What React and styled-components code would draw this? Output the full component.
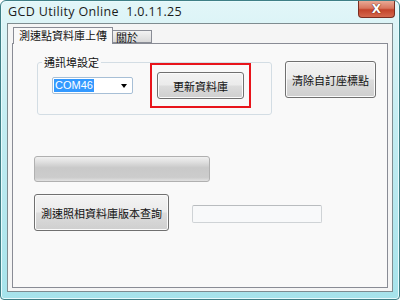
import React from "react";
import styled, { createGlobalStyle } from "styled-components";

const Global = createGlobalStyle`
  html, body { margin: 0; padding: 0; background: #ffffff; }
  body { font-family: "Noto Sans CJK TC", "Noto Sans", sans-serif; }
`;

const Window = styled.div`
  width: 400px;
  height: 300px;
  box-sizing: border-box;
  border: 1px solid #3f7f86;
  border-radius: 6px 6px 4px 4px;
  background: linear-gradient(to bottom, #e2f6f8 0%, #c4edf2 40%, #a6e3eb 100%);
  box-shadow: inset 0 0 0 1px #e8fbfd;
  display: flex;
  flex-direction: column;
  overflow: hidden;
`;

const TitleBar = styled.div`
  height: 22px;
  display: flex;
  align-items: flex-start;
  justify-content: space-between;
  padding: 0 4px 0 7px;
`;

const Title = styled.div`
  font-family: "Open Sans", "Noto Sans", sans-serif;
  font-size: 12.5px;
  color: #1b1b1b;
  margin-top: 2px;
  white-space: pre;
  letter-spacing: 0.35px;
`;

const CloseButton = styled.div`
  width: 37px;
  height: 17px;
  box-sizing: border-box;
  border: 1px solid #7a2d20;
  border-top: none;
  border-radius: 0 0 4px 4px;
  background: linear-gradient(to bottom, #e9a995 0%, #d8765e 45%, #c3442b 55%, #d4684d 100%);
  display: flex;
  align-items: center;
  justify-content: center;
  color: #ffffff;
  font-family: "DejaVu Sans", sans-serif;
  font-weight: bold;
  font-size: 12px;
  text-shadow: 0 0 1px #5a1a10, 0 0 1px #5a1a10;
`;

const Client = styled.div`
  margin: 0 6px;
  height: 269px;
  box-sizing: border-box;
  border: 1px solid #7f8c90;
  background: #f5f5f5;
  padding: 3px 4px 3px 4px;
  display: flex;
  flex-direction: column;
`;

const TabStrip = styled.div`
  height: 16px;
  display: flex;
  align-items: flex-end;
  padding-left: 1px;
  position: relative;
  z-index: 1;
`;

const Tab = styled.div`
  height: ${(p) => (p.$active ? "17px" : "13px")};
  box-sizing: border-box;
  padding: ${(p) => (p.$active ? "0 5px" : "0 13px 0 3px")};
  border: 1px solid #898c95;
  border-bottom: ${(p) => (p.$active ? "none" : "1px solid #898c95")};
  border-left: ${(p) => (p.$active ? "1px solid #898c95" : "none")};
  background: ${(p) =>
    p.$active ? "#f9f9f9" : "linear-gradient(to bottom, #f3f3f3, #d9d9d9)"};
  font-size: 11px;
  line-height: ${(p) => (p.$active ? "15px" : "12px")};
  color: #111;
  margin-bottom: ${(p) => (p.$active ? "-1px" : "0")};
  white-space: nowrap;
`;

const TabPage = styled.div`
  flex: 1;
  box-sizing: border-box;
  border: 1px solid #898c95;
  background: #f9f9f9;
  padding: 18px 0 0 21px;
  display: flex;
  flex-direction: column;
`;

const TopRow = styled.div`
  display: flex;
  align-items: flex-start;
  gap: 13px;
  margin-left: 3px;
`;

const GroupBox = styled.fieldset`
  margin: -5px 0 0 0;
  width: 235px;
  height: 58px;
  box-sizing: border-box;
  border: 1px solid #d3dde4;
  border-radius: 3px;
  padding: 0 0 0 14px;
  display: flex;
  align-items: flex-start;
`;

const Legend = styled.legend`
  font-size: 11px;
  color: #111;
  padding: 0 2px;
  margin-left: -10px;
  line-height: 11px;
`;

const Combo = styled.div`
  margin-top: 9px;
  width: 81px;
  height: 17px;
  box-sizing: border-box;
  border: 1px solid #a7bfd6;
  border-radius: 2px;
  background: #ffffff;
  display: flex;
  align-items: center;
  padding: 0 5px 0 1px;
  justify-content: space-between;
`;

const Selected = styled.span`
  background: #3399ff;
  color: #ffffff;
  font-family: "Liberation Sans", sans-serif;
  font-size: 11px;
  line-height: 13px;
  padding: 0 1px;
`;

const Arrow = styled.span`
  width: 0;
  height: 0;
  border-left: 3.5px solid transparent;
  border-right: 3.5px solid transparent;
  border-top: 4px solid #000;
`;

const Highlight = styled.div`
  margin-left: 17px;
  margin-top: -5px;
  border: 2px solid #e8141b;
  padding: 7px 5px;
`;

const Button = styled.div`
  width: ${(p) => p.$w}px;
  height: ${(p) => p.$h}px;
  margin-top: ${(p) => p.$top || 0}px;
  box-sizing: border-box;
  border: 1px solid #707070;
  border-radius: 3px;
  background: linear-gradient(to bottom, #f3f3f3 0%, #ebebeb 48%, #dcdcdc 52%, #cfcfcf 100%);
  box-shadow: inset 0 0 0 1px #fbfbfb;
  display: flex;
  align-items: center;
  justify-content: center;
  font-size: 11px;
  color: #111;
  white-space: nowrap;
`;

const Progress = styled.div`
  margin-top: 41px;
  width: 176px;
  height: 26px;
  box-sizing: border-box;
  border: 1px solid #b0b0b0;
  border-radius: 3px;
  background: linear-gradient(to bottom, #f1f1f1 0%, #e0e0e0 20%, #c9c9c9 45%, #cccccc 85%, #e2e2e2 100%);
`;

const BottomRow = styled.div`
  margin-top: 12px;
  display: flex;
  align-items: flex-start;
  gap: 23px;
`;

const TextBox = styled.div`
  margin-top: 11px;
  width: 130px;
  height: 18px;
  box-sizing: border-box;
  border: 1px solid #cfd3d6;
  border-top-color: #b9bcbf;
  border-radius: 2px;
  background: #f8f9fa;
`;

export default function App() {
  return (
    <>
      <Global />
      <Window>
        <TitleBar>
          <Title>GCD Utility Online  1.0.11.25</Title>
          <CloseButton>X</CloseButton>
        </TitleBar>
        <Client>
          <TabStrip>
            <Tab $active>測速點資料庫上傳</Tab>
            <Tab>關於</Tab>
          </TabStrip>
          <TabPage>
            <TopRow>
              <GroupBox>
                <Legend>通訊埠設定</Legend>
                <Combo>
                  <Selected>COM46</Selected>
                  <Arrow />
                </Combo>
                <Highlight>
                  <Button $w={87} $h={27}>更新資料庫</Button>
                </Highlight>
              </GroupBox>
              <Button $w={91} $h={37} $top={-1}>清除自訂座標點</Button>
            </TopRow>
            <Progress />
            <BottomRow>
              <Button $w={135} $h={37}>測速照相資料庫版本查詢</Button>
              <TextBox />
            </BottomRow>
          </TabPage>
        </Client>
      </Window>
    </>
  );
}
